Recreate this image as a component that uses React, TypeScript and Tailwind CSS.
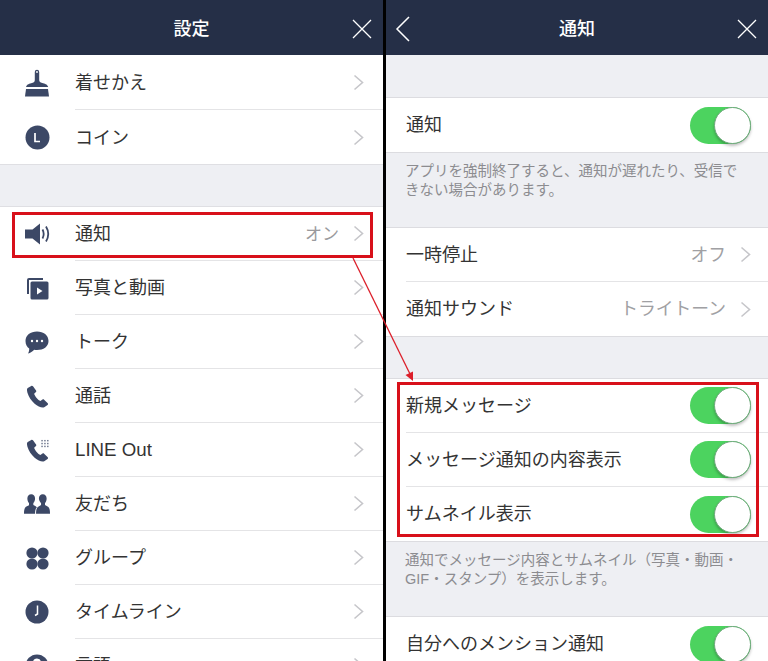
const stackCls = "font-['Liberation_Sans','Noto_Sans_CJK_JP','Noto_Sans',sans-serif]";

function Chevron() {
  return (
    <svg width="11" height="17" viewBox="0 0 11 17" className="shrink-0">
      <path d="M1.5 1.5 L9.5 8.5 L1.5 15.5" fill="none" stroke="#c6c6ca" strokeWidth="1.6" />
    </svg>
  );
}

const ic = "#3c4866";

function Brush() {
  return (
    <svg width="24" height="28" viewBox="0 0 24 28">
      <path d="M9.800 3a2.200 2.200 0 0 1 4.400 0v8c0 1.500 1 2.500 3 3 2.500.7 5 1 6 4H1c1-3 3.500-3.300 6-4 2-.5 2.800-1.500 2.800-3z" fill={ic} />
      <circle cx="12" cy="3" r="0.900" fill="#fff" />
      <path d="M1 20h22l1 7.500H0z" fill={ic} />
    </svg>
  );
}
function Coin() {
  return (
    <svg width="25" height="25" viewBox="0 0 25 25">
      <circle cx="12.500" cy="12.500" r="12" fill={ic} />
      <path d="M10 8v8.500h5" fill="none" stroke="#fff" strokeWidth="1.700" />
    </svg>
  );
}
function Speaker() {
  return (
    <svg width="25" height="22" viewBox="0 0 25 22">
      <path d="M0 6.500h7.500L15 .500v21l-7.500-6H0z" fill={ic} />
      <path d="M17.500 6.500c1.500 2.800 1.500 6.200 0 9M21 3.500c2.700 4.500 2.700 10.500 0 15" fill="none" stroke={ic} strokeWidth="1.800" />
    </svg>
  );
}
function Media() {
  return (
    <svg width="23" height="23" viewBox="0 0 23 23">
      <path d="M1 17V3a2 2 0 0 1 2-2h14v2H3v14z" fill={ic} />
      <rect x="4.500" y="4.500" width="18" height="18" rx="1.500" fill={ic} />
      <path d="M11 10.500v7l5.500-3.500z" fill="#fff" />
    </svg>
  );
}
function Talk() {
  return (
    <svg width="24" height="23" viewBox="0 0 24 23">
      <path d="M12 .500C18.500.500 23.500 4.300 23.500 10S18.500 19 12 19c-1 0-2-.1-2.800-.3C7.500 20.300 5.500 22 3 22.500c1-1.500 1.300-3.200 1.200-5C2 16.300.500 13.500.500 10 .500 4.300 5.500.500 12 .500z" fill={ic} />
      <circle cx="7" cy="10" r="1.200" fill="#fff" />
      <circle cx="12" cy="10" r="1.200" fill="#fff" />
      <circle cx="17" cy="10" r="1.200" fill="#fff" />
    </svg>
  );
}
function Phone({ dots }: { dots?: boolean }) {
  return (
    <svg width="23" height="23" viewBox="0 0 24 24">
      <path d="M5.500 1 1.800 3C.8 3.700.8 5.500 1.500 8c1.300 4.300 4 8.300 7.500 11.500 3.500 3 7.500 4.800 10 3.800l3.500-2.500c.6-.5.700-1.200.2-1.800l-3.800-3.700c-.5-.5-1.100-.5-1.700-.1l-2.200 1.500c-2.300-.7-5.800-4.800-6.500-7.500l1.900-1.900c.4-.5.400-1.100.1-1.600L7.300 1.400C6.900.8 6.100.7 5.500 1z" fill={ic} />
      {dots && (
        <g fill={ic} opacity="0.75">
          {[16, 19, 22].map((x) =>
            [1, 4, 7].map((y) => <rect key={`${x}-${y}`} x={x} y={y} width="1.500" height="1.500" />),
          )}
        </g>
      )}
    </svg>
  );
}
function Friends() {
  return (
    <svg width="27" height="20" viewBox="0 0 27 20">
      <path d="M7.500 0c2.500 0 4 1.800 4 4.200 0 2-.7 3.500-1.800 4.800v2c1.500.7 2.700 1.500 3.700 2.500-1.300 1-1.900 3.200-1.900 6.500H0c0-4 .7-6.300 2.500-7.300l2.700-1.500V9C4.100 7.700 3.500 6.200 3.500 4.200 3.500 1.800 5 0 7.500 0z" fill={ic} />
      <path d="M19.500 0c2.500 0 4 1.800 4 4.200 0 2-.6 3.500-1.700 4.800v2l2.700 1.500c1.800 1 2.500 3.300 2.500 7.500H12.500c0-4 .8-6.500 2.700-7.500l2.500-1.500V9c-1.100-1.300-2.200-2.800-2.200-4.800C15.500 1.800 17 0 19.500 0z" fill={ic} />
    </svg>
  );
}
function Group() {
  return (
    <svg width="23" height="23" viewBox="0 0 23 23">
      <circle cx="6" cy="6" r="5.600" fill={ic} />
      <circle cx="17" cy="6" r="5.600" fill={ic} />
      <circle cx="6" cy="17" r="5.600" fill={ic} />
      <circle cx="17" cy="17" r="5.600" fill={ic} />
    </svg>
  );
}
function Clock() {
  return (
    <svg width="24" height="24" viewBox="0 0 24 24">
      <circle cx="12" cy="12" r="11.500" fill={ic} />
      <path d="M12.500 5.500v8.500L10 15.500" fill="none" stroke="#fff" strokeWidth="1.500" />
    </svg>
  );
}
function Globe() {
  return (
    <svg width="24" height="24" viewBox="0 0 24 24">
      <circle cx="12" cy="12" r="11.500" fill={ic} />
      <circle cx="12" cy="8.500" r="4" fill="#ffffff" />
    </svg>
  );
}

function Toggle() {
  return (
    <div className="relative h-[37px] w-[61px] shrink-0 rounded-full bg-[#4cd35f]">
      <div className="absolute right-0 top-0 h-[37px] w-[37px] rounded-full border border-[#6fa97c] bg-white shadow-[0_2px_3px_rgba(0,0,0,0.25)]" />
    </div>
  );
}

function SettingRow({ icon, label, value, last, latin }: { icon: React.ReactNode; label: string; value?: string; last?: boolean; latin?: boolean }) {
  return (
    <div className="flex h-[54px] shrink-0 items-stretch bg-white">
      <div className="flex w-[75px] shrink-0 items-center pl-[24px]">
        <div className="flex w-[26px] justify-center">{icon}</div>
      </div>
      <div className={`flex flex-1 items-center justify-between pr-[19px] ${last ? "" : "border-b border-[#e4e4e6]"}`}>
        <span className={`pt-[2px] text-[#333333] ${latin ? "text-[18.700px]" : "text-[18px]"}`}>{label}</span>
        <div className="flex items-center gap-[14px]">
          {value && <span className="pt-[2px] text-[17px] text-[#9a9a9d]">{value}</span>}
          <Chevron />
        </div>
      </div>
    </div>
  );
}

function RightRow({ label, value, toggle, last }: { label: string; value?: string; toggle?: boolean; last?: boolean }) {
  return (
    <div className="h-[54px] shrink-0 bg-white pl-[20px]">
      <div className={`flex h-full items-center justify-between pr-[17px] ${last ? "" : "border-b border-[#e4e4e6]"}`}>
        <span className="pt-[1px] text-[18px] text-[#333333]">{label}</span>
        {toggle ? (
          <Toggle />
        ) : (
          <div className="flex items-center gap-[14px]">
            <span className="pt-[1px] text-[17.800px] text-[#a0a0a3]">{value}</span>
            <Chevron />
          </div>
        )}
      </div>
    </div>
  );
}

function Header({ title, back }: { title: string; back?: boolean }) {
  return (
    <header className="relative flex h-[55px] shrink-0 items-center justify-center bg-[#252f47] pt-[3px]">
      <span className="text-[18px] font-medium text-white">{title}</span>
      {back && (
        <svg width="16" height="28" viewBox="0 0 16 28" className="absolute left-[9px] top-[15px]">
          <path d="M14 2 L2 14 L14 26" fill="none" stroke="#fff" strokeWidth="1.500" />
        </svg>
      )}
      <svg width="20" height="20" viewBox="0 0 20 20" className="absolute right-[11px] top-[19px]">
        <path d="M1 1 L19 19 M19 1 L1 19" fill="none" stroke="#fff" strokeWidth="1.300" />
      </svg>
    </header>
  );
}

function Note({ lines }: { lines: string[] }) {
  return (
    <div className="border-t border-[#dcdce0] px-[19px] pt-[9px] text-[14.500px] leading-[19px] text-[#8c8c90]">
      {lines.map((l) => (
        <div key={l} className="whitespace-nowrap">{l}</div>
      ))}
    </div>
  );
}

export default function App() {
  return (
    <div className={`relative flex h-[661px] w-[768px] overflow-hidden bg-black ${stackCls}`}>
      <section className="flex w-[383px] shrink-0 flex-col overflow-hidden bg-white">
        <Header title="設定" />
        <div className="h-px shrink-0" />
        <SettingRow icon={<Brush />} label="着せかえ" />
        <SettingRow icon={<Coin />} label="コイン" last />
        <div className="h-[43px] shrink-0 border-y border-[#dfdfe3] bg-[#eeeff3]" />
        <SettingRow icon={<Speaker />} label="通知" value="オン" />
        <SettingRow icon={<Media />} label="写真と動画" />
        <SettingRow icon={<Talk />} label="トーク" />
        <SettingRow icon={<Phone />} label="通話" />
        <SettingRow icon={<Phone dots />} label="LINE Out" latin />
        <SettingRow icon={<Friends />} label="友だち" />
        <SettingRow icon={<Group />} label="グループ" />
        <SettingRow icon={<Clock />} label="タイムライン" />
        <SettingRow icon={<Globe />} label="言語" />
      </section>
      <section className="ml-[3px] flex flex-1 flex-col overflow-hidden bg-[#eeeff3]">
        <Header title="通知" back />
        <div className="h-[42px] shrink-0" />
        <div className="shrink-0 border-t border-[#dcdce0]">
          <RightRow label="通知" toggle last />
        </div>
        <div className="h-[75px] shrink-0">
          <Note lines={["アプリを強制終了すると、通知が遅れたり、受信で", "きない場合があります。"]} />
        </div>
        <div className="shrink-0 border-t border-[#dcdce0]">
          <RightRow label="一時停止" value="オフ" />
          <RightRow label="通知サウンド" value="トライトーン" last />
        </div>
        <div className="h-[43px] shrink-0 border-y border-[#dcdce0]" />
        <RightRow label="新規メッセージ" toggle />
        <RightRow label="メッセージ通知の内容表示" toggle />
        <RightRow label="サムネイル表示" toggle last />
        <div className="h-[75px] shrink-0">
          <Note lines={["通知でメッセージ内容とサムネイル（写真・動画・", "GIF・スタンプ）を表示します。"]} />
        </div>
        <div className="shrink-0 border-t border-[#dcdce0]">
          <RightRow label="自分へのメンション通知" toggle last />
        </div>
      </section>

      <div className="pointer-events-none absolute left-[12px] top-[212px] h-[46px] w-[361px] border-[3px] border-[#d8101a]" />
      <div className="pointer-events-none absolute left-[397px] top-[382px] h-[155px] w-[362px] border-[3px] border-[#d8101a]" />
      <svg width="768" height="661" viewBox="0 0 768 661" className="pointer-events-none absolute left-0 top-0">
        <path d="M353 258 L410 374" stroke="#dc1f2a" strokeWidth="1.300" fill="none" />
        <path d="M413 381 L405.500 375 L413 371.500z" fill="#dc1f2a" />
      </svg>
    </div>
  );
}
